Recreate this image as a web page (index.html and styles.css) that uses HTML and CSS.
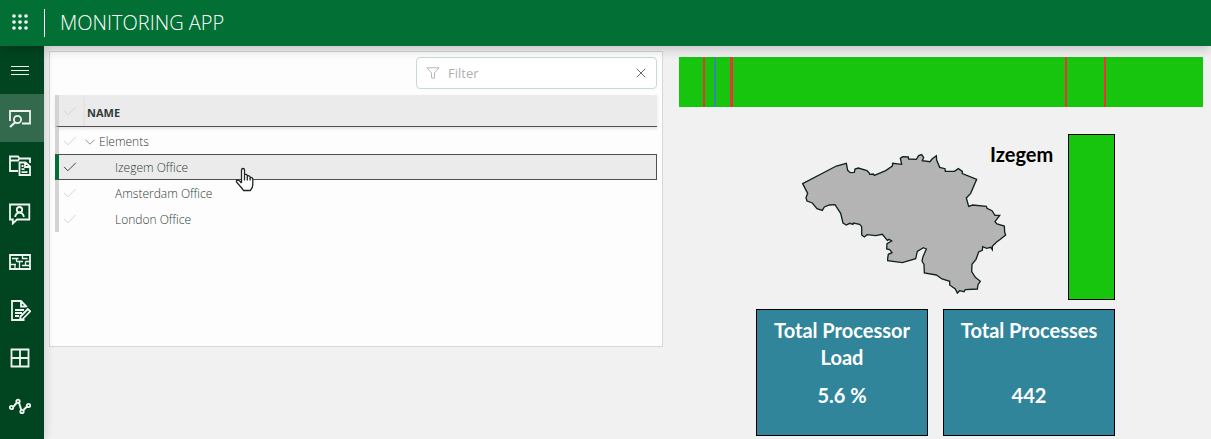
FILE: index.html
```html
<!DOCTYPE html>
<html lang="en">
<head>
<meta charset="utf-8">
<meta name="viewport" content="width=device-width, initial-scale=1">
<title>Monitoring App</title>
<link rel="stylesheet" href="styles.css">
</head>
<body>
<svg class="defs" aria-hidden="true">
  <symbol id="tick" viewBox="0 0 14 10"><path d="M1 4.8l3.8 4L12.8.8"/></symbol>
</svg>
<header class="topbar">
  <button class="launcher" type="button" aria-label="Apps">
    <svg width="16" height="16" viewBox="0 0 16 16"><circle cx="2" cy="2" r="1.800"/><circle cx="8" cy="2" r="1.800"/><circle cx="14" cy="2" r="1.800"/><circle cx="2" cy="8" r="1.800"/><circle cx="8" cy="8" r="1.800"/><circle cx="14" cy="8" r="1.800"/><circle cx="2" cy="14" r="1.800"/><circle cx="8" cy="14" r="1.800"/><circle cx="14" cy="14" r="1.800"/></svg>
  </button>
  <h1 class="title">MONITORING APP</h1>
</header>
<div class="shell">
  <nav class="sidebar" aria-label="Main">
    <button class="nav-item" type="button" aria-label="Menu"><svg viewBox="0 0 22 22"><path stroke-width="1" d="M2 7.500h18M2 11.500h18M2 15.500h18"/></svg></button>
    <a class="nav-item active" href="#" aria-label="Monitor"><svg viewBox="0 0 22 22"><path d="M1 14V4h20v12.500H13"/><circle cx="8.500" cy="12.500" r="3.600"/><path stroke-width="2.200" d="M6 15.500L1 20"/></svg></a>
    <a class="nav-item" href="#" aria-label="Reports"><svg viewBox="0 0 22 22"><path d="M9 16H1V1.500h8l1.500 2H21V8M1 5.500h8l1.500-2"/><path d="M10.500 7.500h6l4.500 4V20h-10.500zM16 7.500V12h5"/><path d="M12.500 11h2M12.500 14.200h3M12.500 17.200h6"/></svg></a>
    <a class="nav-item" href="#" aria-label="Contacts"><svg viewBox="0 0 22 22"><path d="M1 1.500h19.300v15H8L3.800 20.500v-4H1z"/><circle cx="10.500" cy="6.700" r="2.700"/><path d="M6.300 14V13q1-3.300 4.200-3.300t4.200 3.300v1"/></svg></a>
    <a class="nav-item" href="#" aria-label="Schedule"><svg viewBox="0 0 22 22"><path d="M1 4h20v14H1z"/><path stroke-width="1.300" d="M3 7.500h6.500M7.500 10.500h6.500M7.500 7.500v3M1 13.500h6M6 13.500v4M10.500 10.500v7M13.500 4v3.500h5M16.500 10.500v4M13 14.500h8M16.500 10.500H21"/></svg></a>
    <a class="nav-item" href="#" aria-label="Notes"><svg viewBox="0 0 22 22"><path d="M17.500 8V7.500L12 2H3v19h12.500M12 2v5.500h5.500M6 11h9M6 14h7M6 17h4"/><path d="M11.500 17.500L18.800 10l2.500 2.300-7.300 7.500-3 1z"/></svg></a>
    <a class="nav-item" href="#" aria-label="Modules"><svg viewBox="0 0 22 22"><path d="M2.500 2.500h17v17h-17zM11 2.500v17M2.500 11h17"/></svg></a>
    <a class="nav-item" href="#" aria-label="Trends"><svg viewBox="0 0 22 22"><path stroke-width="2" d="M4.500 11.700L7.500 8M9.800 7.200l2.500 7.800M14.500 15l4-4"/><circle cx="2.500" cy="12.500" r="1.700"/><circle cx="9" cy="6.300" r="1.700"/><circle cx="13" cy="16.500" r="1.700"/><circle cx="19.500" cy="10.500" r="1.700"/></svg></a>
  </nav>
  <main class="content">
    <section class="panel" aria-label="Elements">
      <div class="filter">
        <svg class="funnel" width="14" height="12" viewBox="0 0 14 12"><path d="M1 .8h12L8.500 6v5h-3V6z"/></svg>
        <input class="filter-input" type="text" placeholder="Filter" aria-label="Filter">
        <button class="clear" type="button" aria-label="Clear filter"><svg width="10" height="10" viewBox="0 0 10 10"><path d="M.7.7l8.600 8.600M9.300.7L.7 9.300"/></svg></button>
      </div>
      <table class="tree">
        <thead>
          <tr><th class="pick"><label><input type="checkbox" aria-label="Select all"><svg class="tick"><use href="#tick"/></svg></label></th><th class="name">NAME</th></tr>
        </thead>
        <tbody>
          <tr><td class="pick"><label><input type="checkbox" aria-label="Select Elements"><svg class="tick"><use href="#tick"/></svg></label></td><td class="name"><span class="group"><svg class="chevron" width="10" height="6" viewBox="0 0 10 6"><path d="M.5.7L5 5.200 9.500.7"/></svg>Elements</span></td></tr>
          <tr class="selected"><td class="pick"><label><input type="checkbox" checked aria-label="Select Izegem Office"><svg class="tick"><use href="#tick"/></svg></label></td><td class="name child">Izegem Office</td></tr>
          <tr><td class="pick"><label><input type="checkbox" aria-label="Select Amsterdam Office"><svg class="tick"><use href="#tick"/></svg></label></td><td class="name child">Amsterdam Office</td></tr>
          <tr><td class="pick"><label><input type="checkbox" aria-label="Select London Office"><svg class="tick"><use href="#tick"/></svg></label></td><td class="name child">London Office</td></tr>
        </tbody>
      </table>
    </section>
    <section class="dashboard" aria-label="Izegem status">
      <svg class="timeline" viewBox="0 0 524 50" preserveAspectRatio="none" shape-rendering="crispEdges" role="img" aria-label="Alarm timeline"><rect width="524" height="50" fill="#18c50e"/><path fill="#ee3338" d="M24 0h2v50h-2zM51 0h3v50h-3zM386 0h2v50h-2zM425 0h2v50h-2z"/><path fill="#3c83b8" d="M35 0h2v50h-2z"/></svg>
      <div class="overview">
        <div class="site">
          <svg class="map" width="207" height="142" viewBox="18 24 621 426" role="img" aria-label="Map of Belgium"><path d="M23 116L124 63L154 55L158 76L166 83L178 82L180 72L190 69L216 77L223 84L224 88L235 87L238 91L272 77L292 63L293 55L320 58L316 40L323 35L340 36L341 42L364 43L371 32L380 29L386 38L382 47L405 50L411 42L424 32L425 45L434 67L450 71L451 79L478 79L490 71L502 79L502 86L545 103L527 145L514 159L521 184L533 180L574 184L576 190L591 197L600 211L614 211L600 230L606 237L628 243L629 262L632 270L616 283L604 292L592 304L592 314L587 307L575 310L563 305L562 316L551 321L543 343L531 358L530 380L541 397L556 409L549 419L547 432L511 434L507 440L494 437L487 444L481 432L464 420L464 409L441 402L424 390L388 384L387 358L381 348L384 335L394 312L385 308L367 319L362 341L322 353L278 347L278 340L280 328L291 323L284 314L275 312L276 296L290 288L282 283L277 286L262 268L242 272L216 269L208 276L200 270L200 245L194 238L175 234L174 238L164 235L154 240L144 234L137 205L120 179L103 180L88 186L82 196L66 191L52 174L36 168L33 158L38 145Z"/></svg>
          <h2 class="site-name">Izegem</h2>
          <div class="state" role="img" aria-label="Normal"></div>
        </div>
        <div class="cards">
          <article class="card"><h3>Total Processor Load</h3><p>5.6 %</p></article>
          <article class="card"><h3>Total Processes</h3><p>442</p></article>
        </div>
      </div>
    </section>
  </main>
</div>
<svg class="pointer" width="20" height="26" viewBox="0 0 20 26" aria-hidden="true"><path d="M6.500 16V3.200q0-1.700 1.500-1.700t1.500 1.700V10V7.500q2.800-.6 2.800 1.500V11 8.800q2.800-.4 2.800 1.700V12v-1.500q2.700-.3 2.700 2V18q0 2.500-2.500 5.500H8.500Q7 21 4.500 18.500L1.500 15q-.5-2 1.500-2 1.500.5 3.500 3M9.500 9v4.500M12.300 9v4.500M15.100 10.500v3"/></svg>
</body>
</html>
```
FILE: styles.css
```css
* { box-sizing: border-box; }

body {
  margin: 0;
  min-height: 100vh;
  display: flex;
  flex-direction: column;
  background: #f1f1f1;
  color: #2f3c39;
  font-family: "Open Sans", "Noto Sans", sans-serif;
  font-size: 12px;
  overflow: hidden;
}

h1, h2, h3, p { margin: 0; }
button { padding: 0; border: 0; background: none; color: inherit; }
svg { display: block; fill: none; stroke: currentColor; }
.defs { position: absolute; width: 0; height: 0; }

.topbar {
  position: relative;
  z-index: 2;
  display: flex;
  align-items: center;
  height: 46px;
  background: #027035;
  color: #fff;
  box-shadow: 0 4px 10px rgba(0, 0, 0, 0.18);
}
.launcher { width: 44px; display: flex; justify-content: center; padding: 0 5px 2px 0; }
.launcher svg { fill: currentColor; stroke: none; }
.title {
  padding-left: 15px;
  border-left: 1px solid #fff;
  font-size: 20px;
  font-weight: 300;
  line-height: 28px;
}

.shell { flex: 1; display: flex; }
.sidebar {
  position: relative;
  z-index: 1;
  flex: none;
  width: 44px;
  background: #004420;
  color: #eff4f1;
  box-shadow: 0 0 10px rgba(0, 0, 0, 0.18);
}
.nav-item {
  display: flex;
  align-items: center;
  width: 44px;
  height: 48px;
  padding-left: 9px;
  color: inherit;
}
.nav-item.active { background: #336a4d; }
.nav-item svg { width: 22px; height: 22px; stroke-width: 1.8; }

.content {
  flex: 1;
  display: grid;
  grid-template-columns: 614fr 524fr;
  align-items: start;
  gap: 16px;
  padding: 5px 8px 0 5px;
}

.panel {
  min-height: 296px;
  padding: 5px;
  border: 1px solid #d6d8d7;
  background: #fdfdfd;
}
.filter {
  display: flex;
  align-items: center;
  width: 241px;
  height: 32px;
  margin: 0 0 6px auto;
  padding: 0 10px 0 9px;
  border: 1px solid #c5dad1;
  border-radius: 4px;
  background: #fff;
}
.funnel { color: #b4b8b6; }
.filter-input {
  flex: 1;
  min-width: 0;
  padding: 0 8px;
  border: 0;
  outline: 0;
  background: none;
  font: 13px "Open Sans", "Noto Sans", sans-serif;
}
.filter-input::placeholder { color: #b0b0b0; opacity: 1; }
.clear { color: #686868; }

.tree { width: 100%; border-spacing: 0; table-layout: fixed; }
.tree th, .tree td { height: 26px; padding: 0; text-align: left; line-height: 16px; }
.tree th {
  height: 32px;
  background: #ebebeb;
  border-bottom: 1px solid #505050;
  box-shadow: 0 2px 3px rgba(0, 0, 0, 0.1);
  font-weight: 700;
}
.tree tbody { font-weight: 300; }
.tree tbody tr:first-child td { height: 27px; }
.tree .pick { width: 30px; padding-left: 4px; border-left: 4px solid #d2d3d2; }
.tree .name { padding-top: 2px; padding-left: 2px; }
.tree th.name { padding-top: 4px; font-size: 11px; }
.tree .name.child { padding-left: 30px; }
.tree .selected td { background: #ebebeb; border-top: 1px solid #505050; border-bottom: 1px solid #505050; }
.tree .selected .pick { border-left-color: #027035; }
.tree .selected .name { border-right: 1px solid #505050; }
.pick input { position: absolute; opacity: 0; width: 14px; height: 10px; margin: 0; }
.tick { width: 14px; height: 10px; color: #d2d5d3; }
.pick input:checked + .tick { color: #3d4a47; }
.group { display: flex; align-items: center; gap: 4px; margin-left: -2px; }
.chevron { color: #909592; }

.dashboard { padding-top: 6px; color: #000; font-family: Lato, "Open Sans", sans-serif; }
.timeline { width: 100%; height: 50px; stroke: none; }
.overview { width: 359px; margin: 27px auto 0 77px; }
.site { display: flex; align-items: flex-start; height: 166px; padding-left: 45px; }
.map { flex: none; margin-top: 19px; fill: #b4b4b4; stroke: #10241b; stroke-width: 4; }
.site-name { margin: 6px 0 0 -18px; font-size: 20px; line-height: 28px; }
.state { width: 47px; height: 166px; margin-left: auto; border: 1px solid #000; background: #18c50e; }
.cards { display: grid; grid-template-columns: 1fr 1fr; gap: 15px; margin-top: 9px; }
.card {
  display: flex;
  flex-direction: column;
  height: 127px;
  padding: 7px 10px 26px;
  border: 1px solid #000;
  background: #31859b;
  color: #fff;
  text-align: center;
  font-size: 20px;
  font-weight: 700;
  line-height: 27px;
}
.card h3 { font-size: inherit; }
.card p { margin-top: auto; }

.pointer { position: absolute; z-index: 3; left: 235px; top: 167px; fill: #fff; stroke: #1d2421; stroke-width: 1.3; }
```
